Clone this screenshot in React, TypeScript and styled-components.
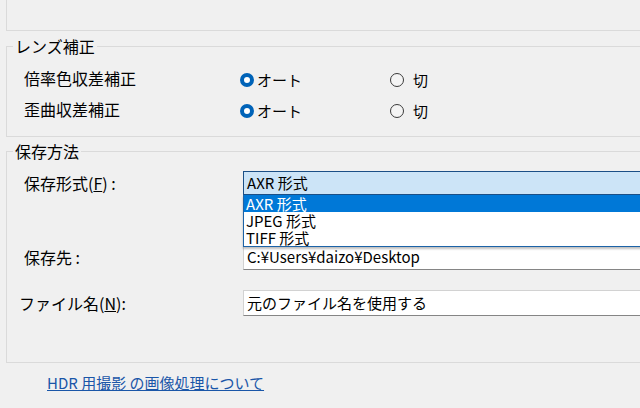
import styled, { createGlobalStyle } from "styled-components";

const GlobalStyle = createGlobalStyle`
    html, body {
        margin: 0;
        padding: 0;
        background: #f0f0f0;
    }
    body {
        font-family: "Noto Sans CJK JP", "Noto Sans", sans-serif;
        font-size: 15px;
        color: #000;
    }
`;

const Page = styled.div`
    width: 640px;
    height: 408px;
    overflow: hidden;
    background: #f0f0f0;
`;

const PrevGroup = styled.div`
    height: 30px;
    margin-left: 6px;
    margin-right: -20px;
    border-left: 1px solid #dadada;
    border-bottom: 1px solid #dadada;
`;

const Group = styled.fieldset<{ top: number; bottomPad: number }>`
    margin: ${(p) => p.top}px -20px 0 6px;
    padding: 0 0 ${(p) => p.bottomPad}px 0;
    border: 1px solid #dadada;
    border-radius: 0;
    min-width: 0;
`;

const Legend = styled.legend`
    margin-left: 6px;
    padding: 0 2px;
    font-size: 16px;
    line-height: 20px;
`;

const RadioRow = styled.div`
    display: grid;
    grid-template-columns: 216px 150px 1fr;
    align-items: center;
    height: 31px;
    padding-left: 17px;
`;

const Label = styled.span`
    font-size: 16px;
    line-height: 20px;
    margin-top: -3px;
`;

const RadioOption = styled.label`
    display: flex;
    align-items: center;
    gap: 3px;
    font-size: 15px;
    line-height: 20px;
`;

const RadioDot = styled.span<{ checked?: boolean }>`
    box-sizing: border-box;
    width: 14px;
    height: 14px;
    border-radius: 50%;
    background: ${(p) => (p.checked ? "#fff" : "#f4f4f4")};
    border: ${(p) => (p.checked ? "4px solid #0063b8" : "1px solid #3a3a3a")};
    margin-right: ${(p) => (p.checked ? 0 : 6)}px;
`;

const RadioGroupList = styled.div`
    padding-top: 8px;
`;

const SaveBody = styled.div`
    padding-top: 10px;
    display: flex;
    flex-direction: column;
`;

const FieldRow = styled.div<{ gapAfter: number }>`
    display: grid;
    grid-template-columns: 236px 1fr;
    align-items: center;
    margin-bottom: ${(p) => p.gapAfter}px;
`;

const FieldLabel = styled.span<{ indent: number }>`
    padding-left: ${(p) => p.indent}px;
    font-size: 16px;
    line-height: 20px;
`;

const ComboWrap = styled.div`
    position: relative;
`;

const Combo = styled.div`
    height: 24px;
    box-sizing: border-box;
    border: 1px solid #1b4f86;
    background: #cce4f7;
    padding-left: 3px;
    font-size: 15px;
    line-height: 22px;
`;

const DropList = styled.ul`
    position: absolute;
    left: 0;
    right: 0;
    top: 24px;
    margin: 0;
    padding: 0;
    list-style: none;
    background: #fff;
    border: 1px solid #1c63a8;
    border-top: none;
    box-shadow: 0 2px 2px rgba(0, 0, 0, 0.25);
    z-index: 2;
`;

const DropItem = styled.li<{ active?: boolean }>`
    height: 17px;
    padding-left: 2px;
    font-size: 15px;
    line-height: 17px;
    background: ${(p) => (p.active ? "#0078d7" : "#fff")};
    color: ${(p) => (p.active ? "#fff" : "#000")};
`;

const TextBox = styled.div`
    height: 26px;
    box-sizing: border-box;
    background: #fff;
    border: 1px solid #d2d2d2;
    border-bottom-color: #858585;
    padding-left: 3px;
    font-size: 15px;
    line-height: 24px;
    white-space: nowrap;
`;

const Underline = styled.span`
    text-decoration: underline;
`;

const Link = styled.a`
    display: block;
    margin: 10px 0 0 47px;
    font-size: 15px;
    line-height: 20px;
    color: #1a56a8;
    text-decoration: underline;
    cursor: pointer;
`;

const radios = [
    { label: "倍率色収差補正" },
    { label: "歪曲収差補正" },
];

export default function App() {
    return (
        <Page>
            <GlobalStyle />
            <PrevGroup />
            <Group top={5} bottomPad={10}>
                <Legend>レンズ補正</Legend>
                <RadioGroupList>
                    {radios.map((r) => (
                        <RadioRow key={r.label}>
                            <Label>{r.label}</Label>
                            <RadioOption>
                                <RadioDot checked />
                                オート
                            </RadioOption>
                            <RadioOption>
                                <RadioDot />
                                切
                            </RadioOption>
                        </RadioRow>
                    ))}
                </RadioGroupList>
            </Group>
            <Group top={4} bottomPad={46}>
                <Legend>保存方法</Legend>
                <SaveBody>
                    <FieldRow gapAfter={49}>
                        <FieldLabel indent={17}>
                            保存形式(<Underline>F</Underline>) :
                        </FieldLabel>
                        <ComboWrap>
                            <Combo>AXR 形式</Combo>
                            <DropList>
                                <DropItem active>AXR 形式</DropItem>
                                <DropItem>JPEG 形式</DropItem>
                                <DropItem>TIFF 形式</DropItem>
                            </DropList>
                        </ComboWrap>
                    </FieldRow>
                    <FieldRow gapAfter={20}>
                        <FieldLabel indent={17}>保存先 :</FieldLabel>
                        <TextBox>C:¥Users¥daizo¥Desktop</TextBox>
                    </FieldRow>
                    <FieldRow gapAfter={0}>
                        <FieldLabel indent={12}>
                            ファイル名(<Underline>N</Underline>):
                        </FieldLabel>
                        <TextBox>元のファイル名を使用する</TextBox>
                    </FieldRow>
                </SaveBody>
            </Group>
            <Link>HDR 用撮影 の画像処理について</Link>
        </Page>
    );
}
